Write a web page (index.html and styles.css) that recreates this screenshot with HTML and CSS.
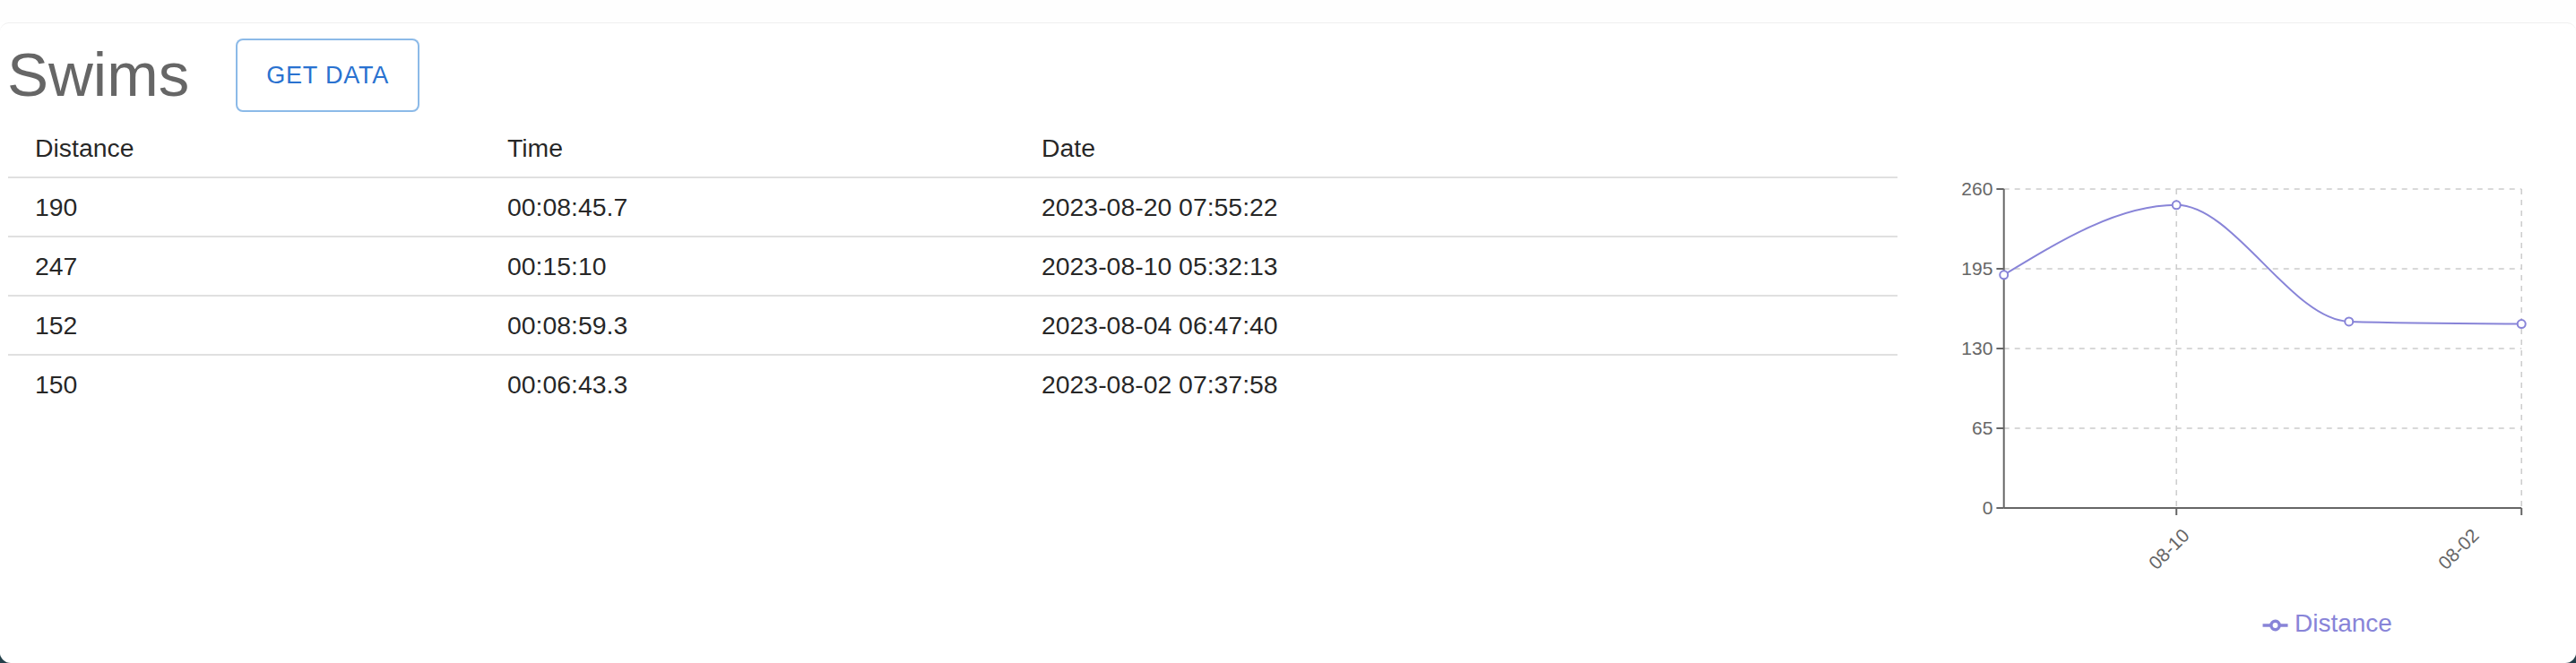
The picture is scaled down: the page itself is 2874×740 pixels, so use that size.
FILE: index.html
```html
<!DOCTYPE html>
<html>
<head>
<meta charset="utf-8">
<title>Swims</title>
<link rel="stylesheet" href="styles.css">
</head>
<body>
<div class="window">
  <div class="topgap"></div>
  <div class="card">
    <div class="header">
      <h1 class="title">Swims</h1>
      <button class="get-btn">GET DATA</button>
    </div>
    <div class="content">
      <table class="swims">
        <colgroup><col class="c1"><col class="c2"><col class="c3"></colgroup>
        <thead>
          <tr><th>Distance</th><th>Time</th><th>Date</th></tr>
        </thead>
        <tbody>
          <tr><td>190</td><td>00:08:45.7</td><td>2023-08-20 07:55:22</td></tr>
          <tr><td>247</td><td>00:15:10</td><td>2023-08-10 05:32:13</td></tr>
          <tr><td>152</td><td>00:08:59.3</td><td>2023-08-04 06:47:40</td></tr>
          <tr><td>150</td><td>00:06:43.3</td><td>2023-08-02 07:37:58</td></tr>
        </tbody>
      </table>
      <svg class="chart" width="757" height="600" viewBox="0 0 757 600">
        <g class="grid">
          <line x1="118.7" y1="78" x2="696.2" y2="78"/>
          <line x1="118.7" y1="167" x2="696.2" y2="167"/>
          <line x1="118.7" y1="256" x2="696.2" y2="256"/>
          <line x1="118.7" y1="345" x2="696.2" y2="345"/>
          <line x1="311.2" y1="78" x2="311.2" y2="434"/>
          <line x1="696.2" y1="78" x2="696.2" y2="434"/>
        </g>
        <g class="axis">
          <line x1="118.7" y1="78" x2="118.7" y2="434"/>
          <line x1="110.4" y1="78" x2="118.7" y2="78"/>
          <line x1="110.4" y1="167" x2="118.7" y2="167"/>
          <line x1="110.4" y1="256" x2="118.7" y2="256"/>
          <line x1="110.4" y1="345" x2="118.7" y2="345"/>
          <line x1="110.4" y1="434" x2="118.7" y2="434"/>
          <line x1="118.7" y1="434" x2="696.2" y2="434"/>
          <line x1="311.2" y1="434" x2="311.2" y2="442"/>
          <line x1="696.2" y1="434" x2="696.2" y2="442"/>
        </g>
        <g class="tick">
          <text x="106.4" y="78" dy="0.355em" text-anchor="end">260</text>
          <text x="106.4" y="167" dy="0.355em" text-anchor="end">195</text>
          <text x="106.4" y="256" dy="0.355em" text-anchor="end">130</text>
          <text x="106.4" y="345" dy="0.355em" text-anchor="end">65</text>
          <text x="106.4" y="434" dy="0.355em" text-anchor="end">0</text>
          <text x="327" y="466" text-anchor="end" transform="rotate(-45 327 466)">08-10</text>
          <text x="650" y="466" text-anchor="end" transform="rotate(-45 650 466)">08-02</text>
        </g>
        <path class="curve" d="M118.7,173.8 C182.87,134.8 247.03,95.8 311.2,95.8 C375.37,95.8 439.53,224.1 503.7,225.9 C567.87,227.7 632.03,228.15 696.2,228.6"/>
        <g class="dots">
          <circle cx="118.7" cy="173.8" r="4.5"/>
          <circle cx="311.2" cy="95.8" r="4.5"/>
          <circle cx="503.7" cy="225.9" r="4.5"/>
          <circle cx="696.2" cy="228.6" r="4.5"/>
        </g>
        <g transform="translate(407.5,551) scale(0.875)">
          <path class="legend-icon" d="M0,16h10.667A5.333,5.333,0,1,1,21.333,16H32M21.333,16A5.333,5.333,0,1,1,10.667,16"/>
        </g>
        <text class="legend-text" x="443" y="572">Distance</text>
      </svg>
    </div>
  </div>
</div>
</body>
</html>
```

FILE: styles.css
```css
html, body {
  margin: 0;
  padding: 0;
  background: #24404a;
}

.window {
  width: 2874px;
  height: 740px;
  background: #ffffff;
  border-radius: 0 0 12px 12px;
  overflow: hidden;
  font-family: "Liberation Sans", Arial, sans-serif;
}

.topgap {
  height: 25px;
  background: #fefefe;
}

.card {
  border-top: 1px solid #efefef;
  border-radius: 10px 10px 0 0;
  background: #ffffff;
}

.header {
  display: flex;
  align-items: center;
  gap: 52px;
  height: 82px;
  margin-top: 17px;
  margin-bottom: 8px;
  padding-left: 8px;
}

.title {
  margin: 0;
  font-size: 69px;
  line-height: 68px;
  font-weight: 400;
  color: #666666;
}

.get-btn {
  width: 205px;
  height: 82px;
  box-sizing: border-box;
  border: 2px solid rgba(25, 118, 210, 0.5);
  border-radius: 8px;
  background: #ffffff;
  color: #2a72d0;
  font-family: "Liberation Sans", Arial, sans-serif;
  font-size: 27px;
  letter-spacing: 0.8px;
  padding: 0;
}

.content {
  display: flex;
  align-items: flex-start;
  padding-left: 9px;
}

.swims {
  border-collapse: collapse;
  table-layout: fixed;
  width: 2108px;
  flex: none;
}

.c1 { width: 527px; }
.c2 { width: 596px; }
.c3 { width: 985px; }

.swims th,
.swims td {
  padding: 12px 30px;
  font-size: 28.4px;
  line-height: 40px;
  font-weight: 400;
  text-align: left;
  color: rgba(0, 0, 0, 0.87);
  border-bottom: 2px solid #e0e0e0;
}

.swims tbody tr:last-child td {
  border-bottom: 0;
}

.chart {
  display: block;
  flex: none;
}

.grid line {
  stroke: #cccccc;
  stroke-width: 1.5;
  stroke-dasharray: 6 6;
}

.axis line {
  stroke: #666666;
  stroke-width: 2;
}

.tick text {
  font-family: "Liberation Sans", Arial, sans-serif;
  font-size: 21px;
  fill: #666666;
}

.curve {
  fill: none;
  stroke: #8884d8;
  stroke-width: 2;
}

.dots circle {
  fill: #ffffff;
  stroke: #8884d8;
  stroke-width: 2;
}

.legend-icon {
  fill: none;
  stroke: #8884d8;
  stroke-width: 4;
}

.legend-text {
  font-family: "Liberation Sans", Arial, sans-serif;
  font-size: 28px;
  fill: #8884d8;
}
```
